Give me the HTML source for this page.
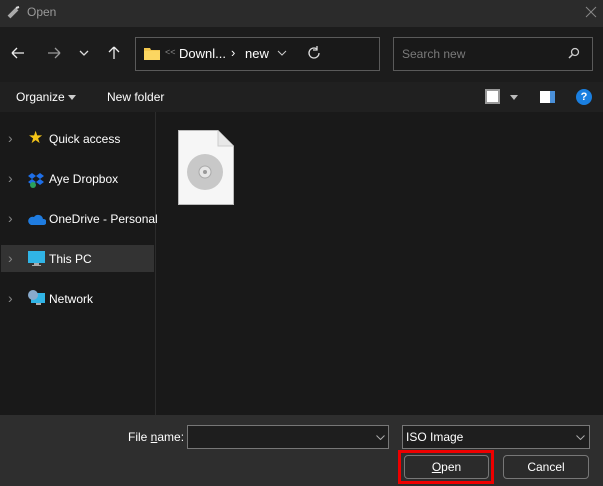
<!DOCTYPE html>
<html><head><style>
*{margin:0;padding:0;box-sizing:border-box}
body{width:603px;height:486px;overflow:hidden;background:#191919;font-family:"Liberation Sans",sans-serif;color:#fff;font-size:12px;position:relative}
.a{position:absolute}
.l{position:absolute;left:49px;font-size:12px;white-space:nowrap;line-height:14px}
.c{position:absolute;left:8px;color:#888;font-size:14px;line-height:14px}
</style></head><body>
<div class="a" style="left:0;top:0;width:603px;height:27px;background:#2b2b2b"></div>
<div class="a" style="left:7px;top:6px;width:13px;height:13px;"><svg width="13" height="13"><path d="M2 11 L10 3" stroke="#aaa" stroke-width="4"/><path d="M9 2 L12 1" stroke="#ddd" stroke-width="2"/></svg></div>
<div class="a" style="left:27px;top:5px;color:#9a9a9a;font-size:12px">Open</div>
<svg class="a" style="left:585px;top:6px" width="12" height="12"><path d="M1 1L11 11M11 1L1 11" stroke="#888" stroke-width="1"/></svg>
<div class="a" style="left:0;top:27px;width:603px;height:55px;background:#1c1c1c"></div>
<svg class="a" style="left:10px;top:45px" width="110" height="16"><path d="M2 8H14M2 8L7 3M2 8L7 13" stroke="#eee" stroke-width="1.3" fill="none"/><path d="M38 8H50M50 8L45 3M50 8L45 13" stroke="#999" stroke-width="1.3" fill="none"/><path d="M70 6L74 10L78 6" stroke="#ddd" stroke-width="1.3" fill="none"/><path d="M104 2V14M104 2L99 7M104 2L109 7" stroke="#eee" stroke-width="1.3" fill="none"/></svg>
<div class="a" style="left:135px;top:37px;width:245px;height:34px;border:1px solid #5a5a5a;background:#191919"></div>
<svg class="a" style="left:144px;top:46px" width="16" height="14"><path d="M0 2H6L7 4H16V14H0Z" fill="#f3c74d"/><path d="M0 5H16V14H0Z" fill="#fbd661"/></svg>
<div class="a" style="left:165px;top:47px;color:#888;font-size:9px">&lt;&lt;</div>
<div class="a" style="left:179px;top:46px;font-size:13px">Downl...</div>
<div class="a" style="left:231px;top:45px;font-size:13px">›</div>
<div class="a" style="left:245px;top:46px;font-size:13px">new</div>
<svg class="a" style="left:277px;top:50px" width="10" height="6"><path d="M1 1L5 5L9 1" stroke="#ccc" fill="none"/></svg>
<svg class="a" style="left:307px;top:46px" width="14" height="14"><path d="M12 7A5 5 0 1 1 10 3M10 0V4H6" stroke="#ddd" stroke-width="1.3" fill="none"/></svg>
<div class="a" style="left:393px;top:37px;width:200px;height:34px;border:1px solid #5a5a5a;background:#191919"></div>
<div class="a" style="left:402px;top:47px;color:#7a7a7a;font-size:12px">Search new</div>
<svg class="a" style="left:568px;top:47px" width="12" height="12"><circle cx="7" cy="5" r="3.5" stroke="#ccc" stroke-width="1.3" fill="none"/><path d="M4.5 7.5L1 11" stroke="#ccc" stroke-width="1.5"/></svg>
<div class="a" style="left:0;top:82px;width:603px;height:30px;background:#202020"></div>
<div class="a" style="left:16px;top:90px;font-size:12px">Organize</div>
<svg class="a" style="left:68px;top:95px" width="8" height="5"><path d="M0 0H8L4 5Z" fill="#ccc"/></svg>
<div class="a" style="left:107px;top:90px;font-size:12px">New folder</div>
<div class="a" style="left:485px;top:89px;width:15px;height:15px;border:2px solid #999;background:#fff"></div>
<svg class="a" style="left:510px;top:95px" width="8" height="5"><path d="M0 0H8L4 5Z" fill="#bbb"/></svg>
<div class="a" style="left:540px;top:91px;width:15px;height:12px;background:#fff;border-right:5px solid #4a90d9"></div>
<div class="a" style="left:576px;top:89px;width:16px;height:16px;border-radius:50%;background:#1a7fe0;font-size:11px;text-align:center;line-height:16px;font-weight:bold">?</div>
<div class="a" style="left:155px;top:112px;width:1px;height:303px;background:#2c2c2c"></div>
<div class="a" style="left:1px;top:245px;width:153px;height:27px;background:#333"></div>
<div class="c" style="top:131px">›</div><div class="c" style="top:171px">›</div><div class="c" style="top:211px">›</div><div class="c" style="top:251px">›</div><div class="c" style="top:291px">›</div>
<div class="l" style="top:132px">Quick access</div>
<div class="l" style="top:172px">Aye Dropbox</div>
<div class="l" style="top:212px">OneDrive - Personal</div>
<div class="l" style="top:252px">This PC</div>
<div class="l" style="top:292px">Network</div>
<div class="a" style="left:28px;top:129px;color:#f5c518;font-size:17px;line-height:18px">★</div>
<svg class="a" style="left:28px;top:172px" width="16" height="16"><path d="M4 1L8 4L4 7L0 4Z M12 1L16 4L12 7L8 4Z M4 7L8 10L4 13L0 10Z M12 7L16 10L12 13L8 10Z" fill="#1e6fe8"/><circle cx="5" cy="13" r="3" fill="#2aa05a"/></svg>
<svg class="a" style="left:28px;top:213px" width="18" height="12"><path d="M3 12H16A3 3 0 0 0 15 6A5 5 0 0 0 6 4A4 4 0 0 0 3 12Z" fill="#1f7ce0"/></svg>
<svg class="a" style="left:28px;top:251px" width="17" height="16"><rect x="0" y="0" width="17" height="12" fill="#30b4e6"/><rect x="6" y="12" width="5" height="2" fill="#aaa"/><rect x="4" y="14" width="9" height="1" fill="#aaa"/></svg>
<svg class="a" style="left:28px;top:290px" width="17" height="16"><rect x="3" y="3" width="14" height="10" fill="#30b4e6"/><circle cx="5" cy="5" r="5" fill="#8ac"/><rect x="8" y="13" width="5" height="2" fill="#aaa"/></svg>
<svg class="a" style="left:178px;top:130px" width="56" height="75"><path d="M0.5 0.5H40L55.5 16V74.5H0.5Z" fill="#f6f6f6" stroke="#bbb"/><path d="M40 0.5V16H55.5" fill="#e8e8e8" stroke="#ccc"/><circle cx="27" cy="42" r="18" fill="#c8c8c8"/><circle cx="27" cy="42" r="6" fill="#e6e6e6" stroke="#aaa"/><circle cx="27" cy="42" r="2" fill="#999"/></svg>
<div class="a" style="left:0;top:415px;width:603px;height:71px;background:#2e2e2e"></div>
<div class="a" style="left:128px;top:430px;font-size:12px">File <u>n</u>ame:</div>
<div class="a" style="left:187px;top:425px;width:202px;height:24px;border:1px solid #777;background:#1e1e1e"></div>
<svg class="a" style="left:376px;top:435px" width="9" height="5"><path d="M0.5 0.5L4.5 4.5L8.5 0.5" stroke="#aaa" fill="none"/></svg>
<div class="a" style="left:402px;top:425px;width:188px;height:24px;border:1px solid #777;background:#1e1e1e"></div>
<div class="a" style="left:406px;top:430px;font-size:12px">ISO Image</div>
<svg class="a" style="left:576px;top:435px" width="9" height="5"><path d="M0.5 0.5L4.5 4.5L8.5 0.5" stroke="#aaa" fill="none"/></svg>
<div class="a" style="left:398px;top:450px;width:96px;height:34px;border:3px solid #e00"></div>
<div class="a" style="left:404px;top:455px;width:85px;height:24px;border:1px solid #777;border-radius:4px;background:#2b2b2b;text-align:center;line-height:22px"><u>O</u>pen</div>
<div class="a" style="left:503px;top:455px;width:86px;height:24px;border:1px solid #777;border-radius:4px;background:#2b2b2b;text-align:center;line-height:22px">Cancel</div>
</body></html>
